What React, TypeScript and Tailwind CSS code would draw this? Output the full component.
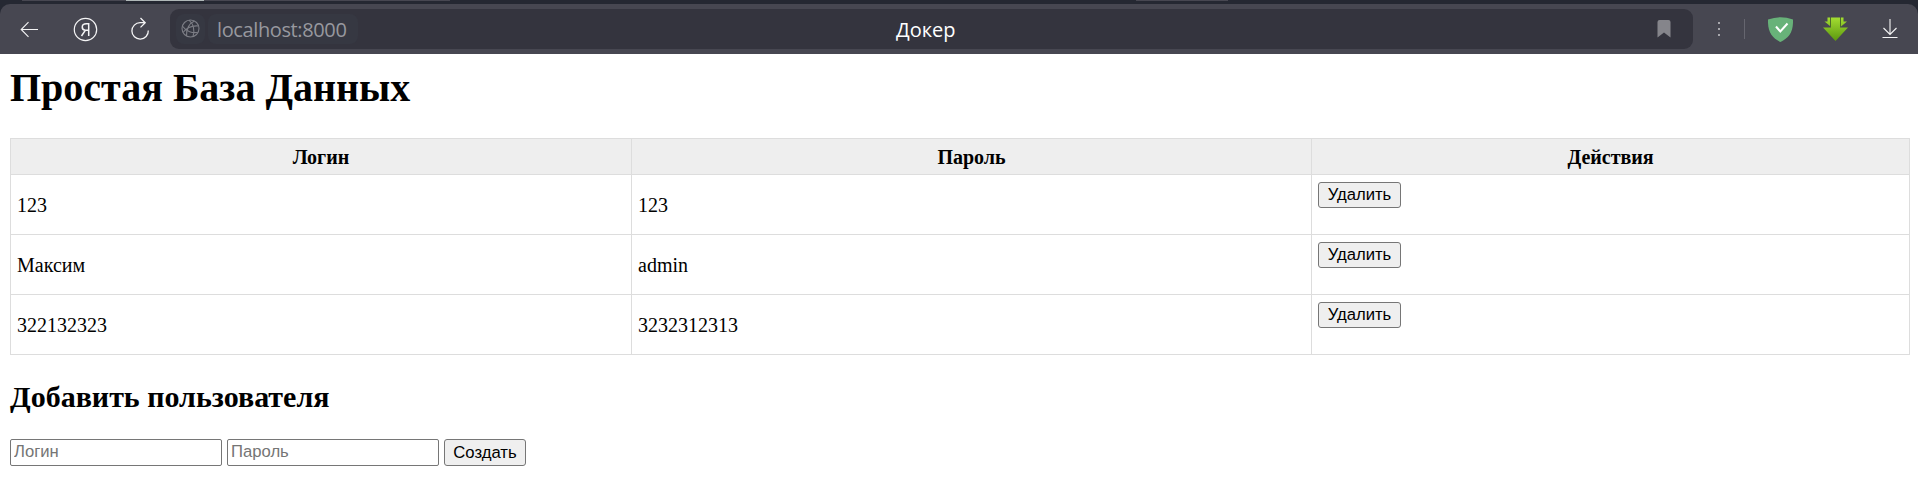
import React from "react";

const users = [
  { login: "123", password: "123" },
  { login: "Максим", password: "admin" },
  { login: "322132323", password: "3232312313" },
];

function TabStrip() {
  return (
    <div className="flex h-1 items-start bg-[#252832]">
      <div className="ml-[22px] h-px w-[104px] bg-[#474751]" />
      <div className="h-px w-[78px] bg-[#b0b8b8]" />
      <div className="h-px w-[246px] bg-[#474751]" />
      <div className="ml-[686px] h-px w-[92px] bg-[#474751]" />
    </div>
  );
}

function Toolbar() {
  return (
    <div className="bg-[#252832]">
      <div className="flex h-[50px] items-center rounded-t-[10px] bg-[#474751]">
        <svg className="ml-[20px] h-[26px] w-[20px] shrink-0" viewBox="0 0 20 26" fill="none" stroke="#f4f4f5" strokeWidth="1.1">
          <path d="M18 13.500H1.500M8.500 6.200L1.200 13.500L8.500 20.800" />
        </svg>
        <svg className="ml-[33px] h-[26px] w-[26px] shrink-0" viewBox="0 0 26 26" fill="none" stroke="#f4f4f5">
          <circle cx="12.500" cy="13.500" r="11.200" strokeWidth="1.200" />
          <path d="M15.700 20V7.700H13.200C8 7.700 8.300 13.600 12 14.300H15.700M12.300 14.300L8.500 20" strokeWidth="1.500" />
        </svg>
        <svg className="ml-[31px] h-[26px] w-[21px] shrink-0" viewBox="0 0 21 26" fill="none" stroke="#f4f4f5" strokeWidth="1.300">
          <path d="M18.300 14.500A8.200 8.200 0 1 1 10.200 6.700H15M10.500 2L15.200 6.700L10.500 11.400" />
        </svg>
        <div className="ml-[19px] flex h-10 w-[1523px] shrink-0 items-center rounded-[9px] bg-[#34343e]">
          <div className="ml-[6px] flex h-[30px] w-[29px] items-center justify-center rounded-lg bg-[#363842]">
            <svg className="size-5" viewBox="0 0 20 20" fill="none" stroke="#7c7d85" strokeWidth="1.100">
              <circle cx="9.500" cy="9.500" r="8.500" />
              <path d="M13.500 2C8.500 4 5 10 5.500 17M8 1.200C12.500 5 13.800 11 12 17.600M1.300 7C5 12.500 12 14.500 17 13.200M2 13.500C6 8.500 12 6.500 17.300 7" />
            </svg>
          </div>
          <div className="ml-[3px] flex h-[30px] w-[150px] items-center rounded-lg bg-[#363842] pl-[9px] font-['Open_Sans',sans-serif] text-[20px] tracking-[-0.38px] text-[#98989f]">
            localhost:8000
          </div>
          <div className="flex-1 pl-[538px] font-['Open_Sans',sans-serif] text-[20px] tracking-[0px] text-white">
            Докер
          </div>
          <svg className="mr-[22px] h-[18px] w-[14px]" viewBox="0 0 14 18" fill="#85858b">
            <path d="M.5 2Q.5 0 2.500 0H11.500Q13.500 0 13.500 2V17.500L7 12.500L.5 17.500Z" />
          </svg>
        </div>
        <svg className="ml-[23px] h-4 w-[6px]" viewBox="0 0 6 16" fill="#a8a8ad">
          <path d="M2 1h2v2H2zM2 7h2v2H2zM2 13h2v2H2z" />
        </svg>
        <div className="ml-[22px] h-5 w-px bg-[#66666f]" />
        <svg className="ml-[23px] h-[25px] w-[25px]" viewBox="0 0 25 25">
          <path d="M0 2.500Q12.500-2.200 25 2.500C25.500 15 21 21 12.500 25C4 21-.5 15 0 2.500Z" fill="#68b279" />
          <path d="M8 9.500L12.300 14.500L19.500 6.500" fill="none" stroke="white" strokeWidth="2" />
        </svg>
        <svg className="ml-[30px] h-[25px] w-[25px]" viewBox="0 0 25 25">
          <defs>
            <linearGradient id="leaf" gradientUnits="userSpaceOnUse" x1="0" y1="0" x2="0" y2="24">
              <stop offset="0" stopColor="#a5df32" />
              <stop offset="1" stopColor="#5b970f" />
            </linearGradient>
          </defs>
          <path d="M4.500 .5H7V9L1.500 4.500H4.500ZM18 .5H20.500V4.500H24L18 9.500Z" fill="url(#leaf)" />
          <path d="M8 .5H17V10.500H25L12.500 24L0 10.500H8Z" fill="url(#leaf)" />
          <path d="M7.500 .5V10M17.500 .5V10" stroke="#4f7422" strokeWidth=".8" />
        </svg>
        <svg className="ml-[34px] h-5 w-4" viewBox="0 0 16 20" fill="none" stroke="#f4f4f5" strokeWidth="1.100">
          <path d="M8 0V15.500M1.500 9L8 15.500L14.500 9M.5 18.500H15.500" />
        </svg>
      </div>
    </div>
  );
}

const button =
  "block rounded-[3px] border border-[#767676] bg-[#efefef] pb-px text-center font-['Liberation_Sans',sans-serif] text-[16.667px] leading-[19px] text-black";
const field =
  "block h-[27px] w-[212px] rounded-[2px] border border-[#767676] bg-white px-[3px] pb-[2px] font-['Liberation_Sans',sans-serif] text-[16.667px] leading-[19px] text-black placeholder:text-[#757575]";

export default function App() {
  return (
    <div className="min-h-[495px] bg-white font-['Liberation_Serif',serif] text-[20px] leading-[23px] text-black">
      <TabStrip />
      <Toolbar />
      <main className="pl-[10px] pr-[8px] pt-[11px]">
        <h1 className="text-[40px] leading-[46px] font-bold">Простая База Данных</h1>
        <table className="mt-[27px] w-full table-fixed border-collapse border border-[#dddddd]">
          <colgroup>
            <col className="w-[621px]" />
            <col className="w-[680px]" />
            <col />
          </colgroup>
          <thead>
            <tr className="h-9 bg-[#eeeeee]">
              <th className="border border-[#dddddd] p-0 pt-px">Логин</th>
              <th className="border border-[#dddddd] p-0 pt-px">Пароль</th>
              <th className="border border-[#dddddd] p-0 pt-px">Действия</th>
            </tr>
          </thead>
          <tbody>
            {users.map((user) => (
              <tr key={user.login} className="h-[60px]">
                <td className="border border-[#dddddd] px-[6px] pt-px pb-0">{user.login}</td>
                <td className="border border-[#dddddd] px-[6px] pt-px pb-0">{user.password}</td>
                <td className="border border-[#dddddd] px-[6px] pt-[7px] pb-0 align-top">
                  <button className={`${button} h-[26px] w-[83px]`}>Удалить</button>
                </td>
              </tr>
            ))}
          </tbody>
        </table>
        <h2 className="mt-[25px] text-[30px] leading-[34px] font-bold">Добавить пользователя</h2>
        <form className="mt-[25px] flex gap-[5px]">
          <input className={field} placeholder="Логин" />
          <input className={field} placeholder="Пароль" />
          <button type="button" className={`${button} h-[27px] w-[82px]`}>Создать</button>
        </form>
      </main>
    </div>
  );
}
